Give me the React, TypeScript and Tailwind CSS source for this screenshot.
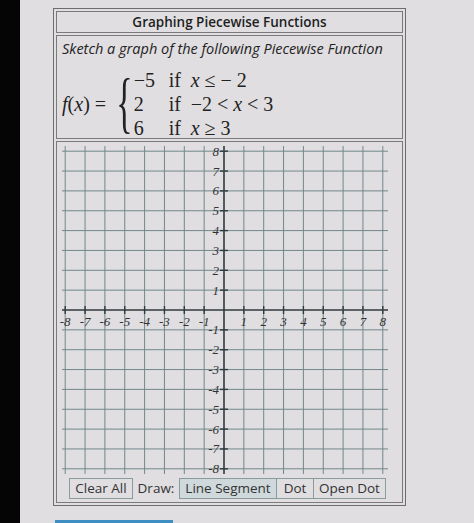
import React from "react";

const U = 19.85;
const C = 165;
const idx = [-8, -7, -6, -5, -4, -3, -2, -1, 0, 1, 2, 3, 4, 5, 6, 7, 8];

function Graph() {
  return (
    <svg width={331} height={331} viewBox="0 0 331 331" className="block">
      {idx.map((i) => (
        <g key={i}>
          <line x1={C + i * U} y1={1} x2={C + i * U} y2={329} stroke={i === 0 ? "#2f3a3a" : "#71888a"} strokeWidth={i === 0 ? 1.6 : 1} />
          <line x1={3} y1={C - i * U} x2={329} y2={C - i * U} stroke={i === 0 ? "#2f3a3a" : "#71888a"} strokeWidth={i === 0 ? 1.6 : 1} />
        </g>
      ))}
      {idx
        .filter((i) => i !== 0)
        .map((i) => (
          <g key={"t" + i}>
            <line x1={C + i * U} y1={C - 4} x2={C + i * U} y2={C + 4} stroke="#2f3a3a" strokeWidth={1.4} />
            <line x1={C - 4} y1={C - i * U} x2={C + 4} y2={C - i * U} stroke="#2f3a3a" strokeWidth={1.4} />
            <text x={C + i * U} y={C + 16} textAnchor="middle" fontFamily="'Liberation Serif', serif" fontStyle="italic" fontSize={13} fill="#333">
              {i < 0 ? "-" + -i : String(i)}
            </text>
            <text x={C - 5} y={C - i * U + 4.5} textAnchor="end" fontFamily="'Liberation Serif', serif" fontStyle="italic" fontSize={13} fill="#333">
              {i < 0 ? "-" + -i : String(i)}
            </text>
          </g>
        ))}
    </svg>
  );
}

export default function App() {
  const math = { fontFamily: "'Liberation Serif', 'DejaVu Serif', serif" };
  return (
    <div className="flex w-[474px] h-[523px] overflow-hidden bg-[#e0dee1]">
      <div className="w-[20px] h-full bg-[#050505]" />
      <div className="flex flex-col pl-[33px] pt-[8px]">
        <div className="w-[353px] border border-[#6d6d6d] p-[2px] flex flex-col gap-[2px]">
          <div
            className="h-[22px] border border-[#7a7a7a] flex items-center justify-center text-[13.5px] font-semibold text-[#1e1e1e]"
            style={{ fontFamily: "'Open Sans', sans-serif" }}
          >
            Graphing Piecewise Functions
          </div>
          <div className="h-[104px] border border-[#7a7a7a] px-[5px] pt-[2px] text-[#222]">
            <div className="text-[14.5px] italic" style={{ fontFamily: "'Open Sans', sans-serif" }}>
              Sketch a graph of the following Piecewise Function
            </div>
            <div className="flex items-center mt-[8px] text-[20px]" style={math}>
              <span className="w-[54px] whitespace-nowrap">
                <i>f</i>(<i>x</i>) =
              </span>
              <span className="inline-block text-[68px] leading-none scale-x-[0.5] font-light mx-[-8px] mt-[-4px]">{"{"}</span>
              <div className="grid grid-cols-[35px_22px_auto] leading-[24px] ml-[1px]">
                <span>−5</span>
                <span>if</span>
                <span className="whitespace-pre">
                  <i>x</i> ≤ − 2
                </span>
                <span>2</span>
                <span>if</span>
                <span>
                  −2 &lt; <i>x</i> &lt; 3
                </span>
                <span>6</span>
                <span>if</span>
                <span>
                  <i>x</i> ≥ 3
                </span>
              </div>
            </div>
          </div>
          <div className="h-[362px] border border-[#7a7a7a] flex flex-col pl-[2px] pt-[3px]">
            <Graph />
            <div
              className="flex items-center mt-[2px] ml-[10px] text-[13.5px] text-[#333]"
              style={{ fontFamily: "'Open Sans', sans-serif" }}
            >
              <div className="h-[21px] w-[64px] border border-[#8a9b9b] flex items-center justify-center">Clear All</div>
              <div className="w-[46px] flex items-center justify-center">Draw:</div>
              <div className="h-[21px] w-[98px] border border-[#8a9b9b] bg-[#cfd9dc] flex items-center justify-center">Line Segment</div>
              <div className="h-[21px] w-[37px] border border-l-0 border-[#8a9b9b] flex items-center justify-center">Dot</div>
              <div className="h-[21px] w-[72px] border border-l-0 border-[#8a9b9b] flex items-center justify-center">Open Dot</div>
            </div>
          </div>
        </div>
        <div className="mt-[14px] ml-[2px] w-[118px] h-[4px] bg-[#3e8ec3]" />
      </div>
    </div>
  );
}
